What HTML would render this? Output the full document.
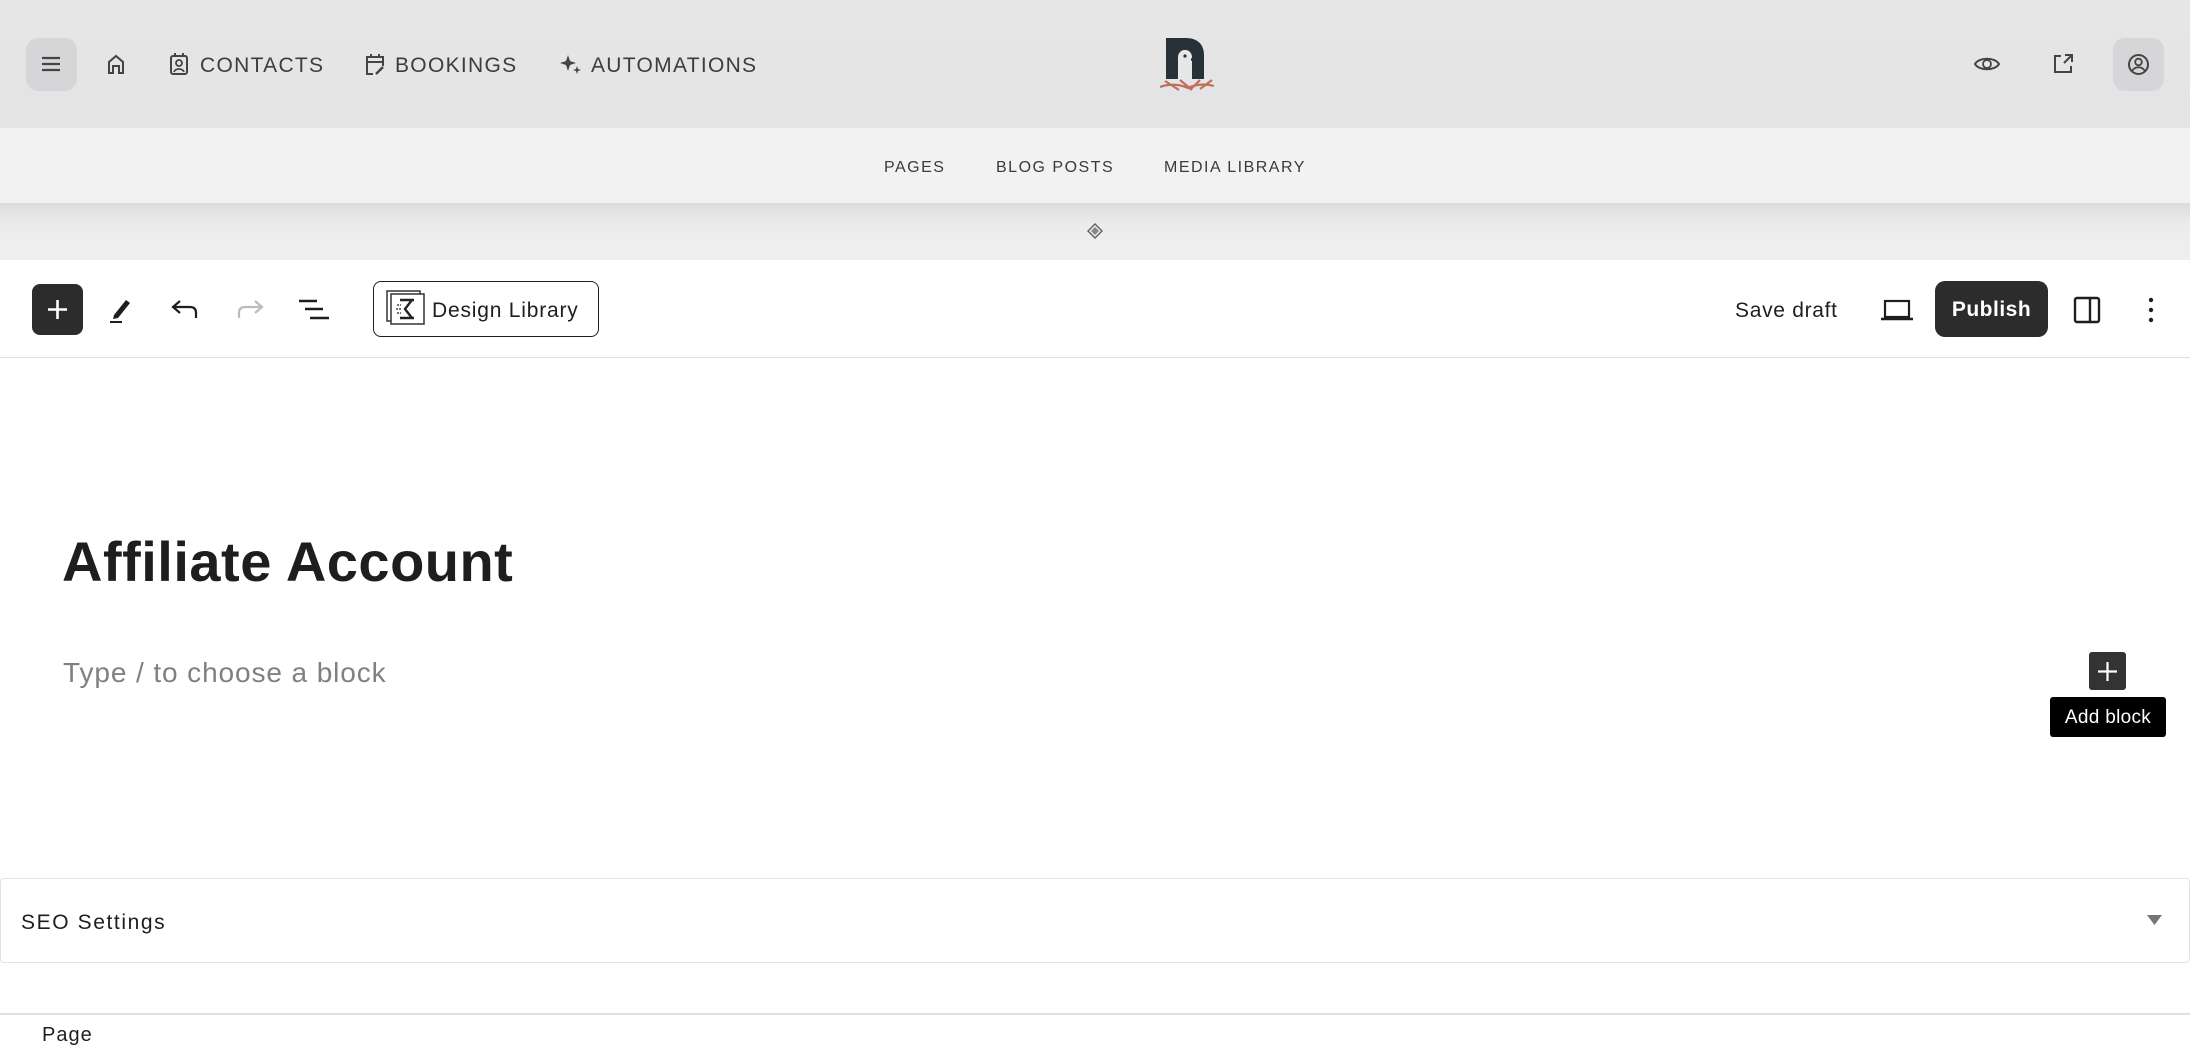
<!DOCTYPE html>
<html><head><meta charset="utf-8"><style>
*{margin:0;padding:0;box-sizing:border-box}
body{width:2190px;height:1052px;overflow:hidden;background:#fff;font-family:"Liberation Sans",sans-serif;color:#1e1e1e;position:relative}
.a{position:absolute}
.top{left:0;top:0;width:2190px;height:128px;background:linear-gradient(#e6e6e7,#e4e4e5)}
.sub{left:0;top:128px;width:2190px;height:75px;background:#f2f2f3}
.strip{left:0;top:203px;width:2190px;height:57px;background:linear-gradient(#dcdcdd,#ececed 40%,#efeff0)}
.nav{font-size:21px;letter-spacing:1.3px;color:#3c3c3c;top:54px}
.subt{font-size:16px;letter-spacing:1.5px;color:#3a3a3a;top:159px}
.ib{border-radius:12px;background:#d6d6d8}
svg{display:block}
</style></head><body>
<div class="a top"></div>
<div class="a sub"></div>
<div class="a strip"></div>

<div class="a ib" style="left:26px;top:38px;width:51px;height:53px"></div>
<svg class="a" style="left:40px;top:54px" width="22" height="20" viewBox="0 0 22 20"><path d="M2 4h18M2 10h18M2 16h18" stroke="#444" stroke-width="2.2"/></svg>
<svg class="a" style="left:105px;top:53px" width="22" height="22" viewBox="0 0 22 22"><path d="M4 20V9l7-6 7 6v11h-4v-7h-6v7z" fill="none" stroke="#444" stroke-width="2"/></svg>
<svg class="a" style="left:169px;top:52px" width="20" height="24" viewBox="0 0 20 24"><rect x="2" y="4" width="16" height="18" rx="2" fill="none" stroke="#444" stroke-width="2"/><path d="M6 1v4M14 1v4" stroke="#444" stroke-width="2"/><circle cx="10" cy="11" r="3" fill="none" stroke="#444" stroke-width="1.8"/><path d="M5 20c1-4 9-4 10 0" fill="none" stroke="#444" stroke-width="1.8"/></svg>
<div class="a nav" style="left:200px">CONTACTS</div>
<svg class="a" style="left:364px;top:52px" width="22" height="24" viewBox="0 0 22 24"><path d="M9 22H3V5h16v9M7 2v4M15 2v4M3 10h16" fill="none" stroke="#444" stroke-width="2"/><path d="M12 22l7-7" stroke="#444" stroke-width="2.4"/></svg>
<div class="a nav" style="left:395px">BOOKINGS</div>
<svg class="a" style="left:560px;top:54px" width="22" height="20" viewBox="0 0 22 20"><path d="M8 1l2 6 6 2-6 2-2 6-2-6-6-2 6-2z" fill="#444"/><path d="M17 12l1 3 3 1-3 1-1 3-1-3-3-1 3-1z" fill="#444"/></svg>
<div class="a nav" style="left:591px">AUTOMATIONS</div>

<svg class="a" style="left:1156px;top:34px" width="64" height="62" viewBox="0 0 64 62"><path d="M10 4h20c11 0 18 6 18 17v24H36V24c0-5-3-8-7-8-4 0-7 3-7 8v21H10z" fill="#263238"/><path d="M22 45V24c0-5 3-8 7-8s7 3 7 8v21z" fill="#e7e7e8"/><circle cx="29" cy="22" r="1.6" fill="#263238"/><path d="M35 24l4 1.5-4 1.5z" fill="#263238"/><path d="M4 53c10-4 22-2 28 1 6-3 16-5 26-2M9 47l14 9M24 46l12 10M44 46l-10 10M56 46l-12 9" stroke="#c0705a" stroke-width="2.2" fill="none"/></svg>

<svg class="a" style="left:1974px;top:54px" width="26" height="20" viewBox="0 0 26 20"><path d="M1 10C5 3 21 3 25 10 21 17 5 17 1 10z" fill="none" stroke="#444" stroke-width="2"/><circle cx="13" cy="10" r="4" fill="none" stroke="#444" stroke-width="1.8"/></svg>
<svg class="a" style="left:2052px;top:53px" width="22" height="22" viewBox="0 0 22 22"><path d="M9 3H3v16h16v-6M12 10l8-8M13 2h7v7" fill="none" stroke="#444" stroke-width="2"/></svg>
<div class="a ib" style="left:2113px;top:38px;width:51px;height:53px"></div>
<svg class="a" style="left:2127px;top:53px" width="23" height="23" viewBox="0 0 23 23"><circle cx="11.5" cy="11.5" r="9.5" fill="none" stroke="#444" stroke-width="2"/><circle cx="11.5" cy="9" r="3.3" fill="none" stroke="#444" stroke-width="1.8"/><path d="M5 18c3-5 10-5 13 0" fill="none" stroke="#444" stroke-width="1.8"/></svg>

<div class="a subt" style="left:884px">PAGES</div>
<div class="a subt" style="left:996px">BLOG POSTS</div>
<div class="a subt" style="left:1164px">MEDIA LIBRARY</div>
<svg class="a" style="left:1087px;top:223px" width="16" height="16" viewBox="0 0 16 16"><path d="M8 1l7 7-7 7-7-7z" fill="none" stroke="#666" stroke-width="1.5"/><path d="M8 4l4 4-4 4-4-4z" fill="#888"/></svg>

<div class="a" style="left:0;top:357px;width:2190px;height:1px;background:#e0e0e0"></div>
<div class="a" style="left:32px;top:284px;width:51px;height:51px;background:#2c2c2c;border-radius:8px"></div>
<svg class="a" style="left:45px;top:297px" width="25" height="25" viewBox="0 0 25 25"><path d="M12.5 3v19M3 12.5h19" stroke="#fff" stroke-width="2.6"/></svg>
<svg class="a" style="left:108px;top:296px" width="26" height="28" viewBox="0 0 26 28"><path d="M6 19l12-15 4 3-12 15-5 1z" fill="#1e1e1e"/><path d="M2 26h12" stroke="#1e1e1e" stroke-width="2"/></svg>
<svg class="a" style="left:170px;top:298px" width="30" height="24" viewBox="0 0 30 24"><path d="M10 3L3 9l7 6M3 9h17c4 0 6 2 6 6v5" fill="none" stroke="#1e1e1e" stroke-width="2.2"/></svg>
<svg class="a" style="left:235px;top:298px" width="30" height="24" viewBox="0 0 30 24"><path d="M20 3l7 6-7 6M27 9H10c-4 0-6 2-6 6v5" fill="none" stroke="#bbb" stroke-width="2.2"/></svg>
<svg class="a" style="left:298px;top:298px" width="32" height="24" viewBox="0 0 32 24"><path d="M1 3h18M7 11h18M12 20h19" stroke="#1e1e1e" stroke-width="2.4"/></svg>
<div class="a" style="left:373px;top:281px;width:226px;height:56px;border:1.5px solid #1e1e1e;border-radius:8px"></div>
<svg class="a" style="left:386px;top:290px" width="40" height="36" viewBox="0 0 40 36"><rect x="1" y="1" width="33" height="30" fill="none" stroke="#333" stroke-width="1.5"/><rect x="5" y="4" width="33" height="30" fill="#fff" stroke="#333" stroke-width="1.5"/><path d="M14 10h14M14 28h14M26 10l-7 9 7 9" fill="none" stroke="#222" stroke-width="2.4"/><path d="M11 15h4M10 19h6M11 23h4" stroke="#444" stroke-width="1.4" stroke-dasharray="2 1"/></svg>
<div class="a" style="left:432px;top:299px;font-size:21px;letter-spacing:.8px;color:#1e1e1e">Design Library</div>

<div class="a" style="left:1735px;top:299px;font-size:21px;letter-spacing:.7px;color:#1e1e1e">Save draft</div>
<svg class="a" style="left:1880px;top:298px" width="34" height="24" viewBox="0 0 34 24"><rect x="5" y="3" width="24" height="16" fill="none" stroke="#1e1e1e" stroke-width="2.2"/><path d="M1 21h32" stroke="#1e1e1e" stroke-width="2.4"/></svg>
<div class="a" style="left:1935px;top:281px;width:113px;height:56px;background:#2c2c2c;border-radius:10px;color:#fff;font-size:21px;font-weight:bold;text-align:center;line-height:58px;letter-spacing:.5px">Publish</div>
<svg class="a" style="left:2073px;top:296px" width="28" height="28" viewBox="0 0 28 28"><rect x="2" y="2" width="24" height="24" rx="2" fill="none" stroke="#1e1e1e" stroke-width="2.4"/><path d="M17 2v24" stroke="#1e1e1e" stroke-width="2.4"/></svg>
<svg class="a" style="left:2146px;top:296px" width="10" height="28" viewBox="0 0 10 28"><circle cx="5" cy="4" r="2.2" fill="#1e1e1e"/><circle cx="5" cy="14" r="2.2" fill="#1e1e1e"/><circle cx="5" cy="24" r="2.2" fill="#1e1e1e"/></svg>

<div class="a" style="left:62px;top:529px;font-size:56px;font-weight:bold;letter-spacing:.5px;color:#1e1e1e">Affiliate Account</div>
<div class="a" style="left:63px;top:657px;font-size:28px;letter-spacing:.9px;color:#808080">Type / to choose a block</div>

<div class="a" style="left:2089px;top:652px;width:37px;height:38px;background:#333;border-radius:3px"></div>
<svg class="a" style="left:2096px;top:660px" width="23" height="23" viewBox="0 0 23 23"><path d="M11.5 2v19M2 11.5h19" stroke="#fff" stroke-width="2.2"/></svg>
<div class="a" style="left:2050px;top:697px;width:116px;height:40px;background:#000;border-radius:3px;color:#fff;font-size:19px;line-height:42px;text-align:center;letter-spacing:.3px">Add block</div>

<div class="a" style="left:0;top:878px;width:2190px;height:85px;border:1.5px solid #e2e2e2;border-radius:4px"></div>
<div class="a" style="left:21px;top:911px;font-size:21px;letter-spacing:1.6px;color:#1e1e1e">SEO Settings</div>
<svg class="a" style="left:2147px;top:915px" width="15" height="11" viewBox="0 0 15 11"><path d="M0 0h15L7.5 10z" fill="#757575"/></svg>
<div class="a" style="left:0;top:1013px;width:2190px;height:1.5px;background:#e0e0e0"></div>
<div class="a" style="left:42px;top:1024px;font-size:20px;letter-spacing:1px;color:#1e1e1e">Page</div>
</body></html>
